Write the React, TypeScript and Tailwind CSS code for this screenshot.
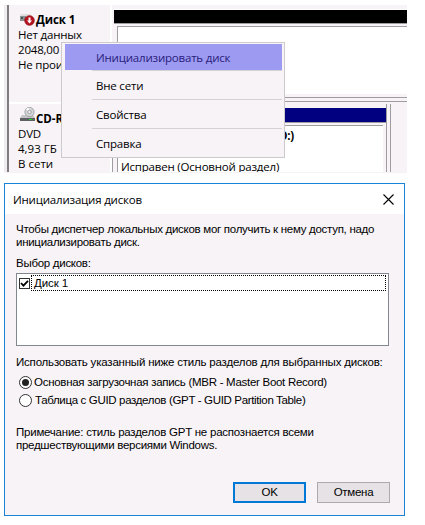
import React from "react";

function DiskIcon() {
  return (
    <svg width="15" height="13" viewBox="0 0 15 13" className="shrink-0">
      <path d="M1 1h9l2 2H0z" fill="#e0dfe0" />
      <rect x="0" y="3" width="6" height="5" fill="#8d9192" />
      <rect x="1" y="4" width="2" height="2" fill="#3d6050" />
      <circle cx="9.5" cy="7.5" r="4.8" fill="#b8141f" stroke="#8b0a14" strokeWidth=".7" />
      <path d="M8.5 4.5h2v3H12L9.500 10.500 7 7.500h1.500z" fill="#fff" />
    </svg>
  );
}

function CdIcon() {
  return (
    <svg width="15" height="15" viewBox="0 0 15 15" className="shrink-0">
      <path d="M2 8h11l2 3H0z" fill="#c4c4c4" />
      <circle cx="9.5" cy="5" r="4.6" fill="#d4d6d8" stroke="#96999c" strokeWidth=".8" />
      <path d="M9.5 5 6 2.3A4 4 0 0 1 9 1z" fill="#fff" />
      <circle cx="9.5" cy="5" r="1.7" fill="#f8f8f8" stroke="#85898c" strokeWidth=".8" />
      <path d="M0 11h15v3H0z" fill="#5d6163" />
      <path d="M9 12h3v1H9z" fill="#20e030" />
    </svg>
  );
}

function MenuItem({ children, last }: { children: React.ReactNode; last?: boolean }) {
  return (
    <div className={`ml-[30px] mr-[2px] flex h-[29px] items-center pl-1 ${last ? "" : "border-b border-[#d5d2d6]"}`}>
      {children}
    </div>
  );
}

function Radio({ on }: { on?: boolean }) {
  return (
    <span className="flex size-[13px] shrink-0 items-center justify-center rounded-full border border-[#333] bg-white">
      {on && <span className="size-[7px] rounded-full bg-[#222]" />}
    </span>
  );
}

export default function App() {
  return (
    <div className="h-[525px] w-[425px] overflow-hidden bg-white pl-1 pt-[5px] text-black">
      <section className="relative h-[168px] w-[403px] font-['Open_Sans','Noto_Sans',sans-serif] text-[11.5px] leading-[15px] tracking-[-0.2px]">
        <div className="flex h-[167px] overflow-hidden bg-[#f7f3f7]">
          <div className="w-[3px] shrink-0 bg-[#efebef]" />
          <div className="w-[2px] shrink-0 bg-[#807d81]" />
          <div className="flex w-[101px] shrink-0 flex-col whitespace-nowrap pl-[9px]">
            <div className="h-[97px] pt-[7px]">
              <div className="flex h-[15px] items-center font-bold">
                <span className="ml-[2px] mr-px"><DiskIcon /></span>
                <span className="tracking-[-0.05px]">Диск 1</span>
              </div>
              <div>Нет данных</div>
              <div>2048,00 ГБ</div>
              <div>Не проинициал</div>
            </div>
            <div className="-ml-[9px] h-[2px] bg-white" />
            <div className="pt-[7px]">
              <div className="flex h-[15px] items-center font-bold">
                <span className="ml-[2px] mr-px -mt-[8px]"><CdIcon /></span>
                <span className="tracking-[-0.05px]">CD-ROM 0</span>
              </div>
              <div>DVD</div>
              <div className="tracking-normal">4,93 ГБ</div>
              <div className="tracking-normal">В сети</div>
            </div>
          </div>
          <div className="w-[2px] shrink-0 bg-white" />
          <div className="flex min-w-0 grow flex-col">
            <div className="h-[96px] pt-[4px]">
              <div className="ml-[2px] h-[15px] border-b border-[#a09da1] border-t border-t-white bg-black" />
              <div className="ml-[5px] mt-[2px] h-[68px] border-l border-t border-[#a09da1] bg-white" />
              <div className="mt-[3px] h-px bg-[#a09da1]" />
              <div className="mt-[3px] h-px bg-[#a09da1]" />
            </div>
            <div className="mt-[3px] flex grow">
              <div className="flex w-[275px] flex-col border-l border-r border-[#a09da1] pt-[4px]">
                <div className="h-[15px] border-b border-[#a09da1] bg-[#000080]" />
                <div className="ml-[4px] mr-[3px] mt-[2px] flex grow flex-col justify-between border-l border-t border-[#a09da1] bg-white">
                  <div className="pr-[89px] pt-[2px] text-right font-bold">(D:)</div>
                  <div className="-mb-[2px] pl-[3px]">Исправен (Основной раздел)</div>
                </div>
              </div>
              <div className="ml-[3px] grow border-l border-[#a09da1]" />
            </div>
          </div>
        </div>
        <div className="h-px bg-[#f5f3f5]" />
        <nav className="absolute left-[57px] top-[37px] h-[116px] w-[224px] border border-[#cccacc] bg-[#f7f3f7] pt-px">
          <div className="ml-[3px] mr-[2px] flex h-[26px] items-center bg-[#9c9af1] pl-[31px] text-[#29207b]">Инициализировать диск</div>
          <div className="ml-[30px] mr-[2px] h-px bg-[#d5d2d6]" />
          <MenuItem>Вне сети</MenuItem>
          <MenuItem>Свойства</MenuItem>
          <MenuItem last>Справка</MenuItem>
        </nav>
      </section>

      <section className="mt-[10px] flex h-[333px] w-[401px] flex-col border border-[#1883d7] bg-[#f7f3f7] font-['Liberation_Sans',Arial,sans-serif] text-[11.5px] leading-[13px] tracking-[-0.28px]">
        <header className="flex h-[30px] shrink-0 items-center justify-between bg-white pl-[8px] pr-[10px] font-['Open_Sans','Noto_Sans',sans-serif] tracking-[-0.2px]">
          <span>Инициализация дисков</span>
          <svg width="11" height="11" viewBox="0 0 11 11"><path d="m.5.5 10 10m0-10-10 10" stroke="#000" strokeWidth="1.1" /></svg>
        </header>
        <div className="flex grow flex-col whitespace-nowrap pl-[11px] pr-[14px] pt-[9px]">
          <p>Чтобы диспетчер локальных дисков мог получить к нему доступ, надо<br />инициализировать диск.</p>
          <p className="mt-[8px]">Выбор дисков:</p>
          <div className="mt-[3px] h-[73px] w-[373px] border border-[#828790] bg-white pl-[2px] pt-px">
            <div className="flex items-center">
              <span className="flex size-[11px] shrink-0 items-center justify-center border border-[#333] bg-white">
                <svg width="9" height="9" viewBox="0 0 9 9"><path d="m1 4 2.4 2.6L8 1.8" fill="none" stroke="#000" strokeWidth="1.8" /></svg>
              </span>
              <span className="ml-px h-[16px] w-[355px] border border-dotted border-black pl-[2px] leading-[14px] tracking-[-0.1px]">Диск 1</span>
            </div>
          </div>
          <p className="mt-[10px] tracking-[-0.2px]">Использовать указанный ниже стиль разделов для выбранных дисков:</p>
          <div className="ml-[3px] mt-[6px] flex h-[15px] items-center gap-[2px]"><Radio on /><span>Основная загрузочная запись (MBR - Master Boot Record)</span></div>
          <div className="ml-[3px] mt-[3px] flex h-[15px] items-center gap-[3px]"><Radio /><span className="tracking-[-0.34px]">Таблица с GUID разделов (GPT - GUID Partition Table)</span></div>
          <p className="mt-[18px]"><span className="tracking-[-0.23px]">Примечание: стиль разделов GPT не распознается всеми</span><br />предшествующими версиями Windows.</p>
          <div className="mt-[30px] flex justify-end gap-[11px]">
            <button className="h-[21px] w-[73px] border-2 border-[#0078d7] bg-[#e6e2e6]">OK</button>
            <button className="h-[21px] w-[73px] border border-[#adaaad] bg-[#e6e2e6]">Отмена</button>
          </div>
        </div>
      </section>
    </div>
  );
}
